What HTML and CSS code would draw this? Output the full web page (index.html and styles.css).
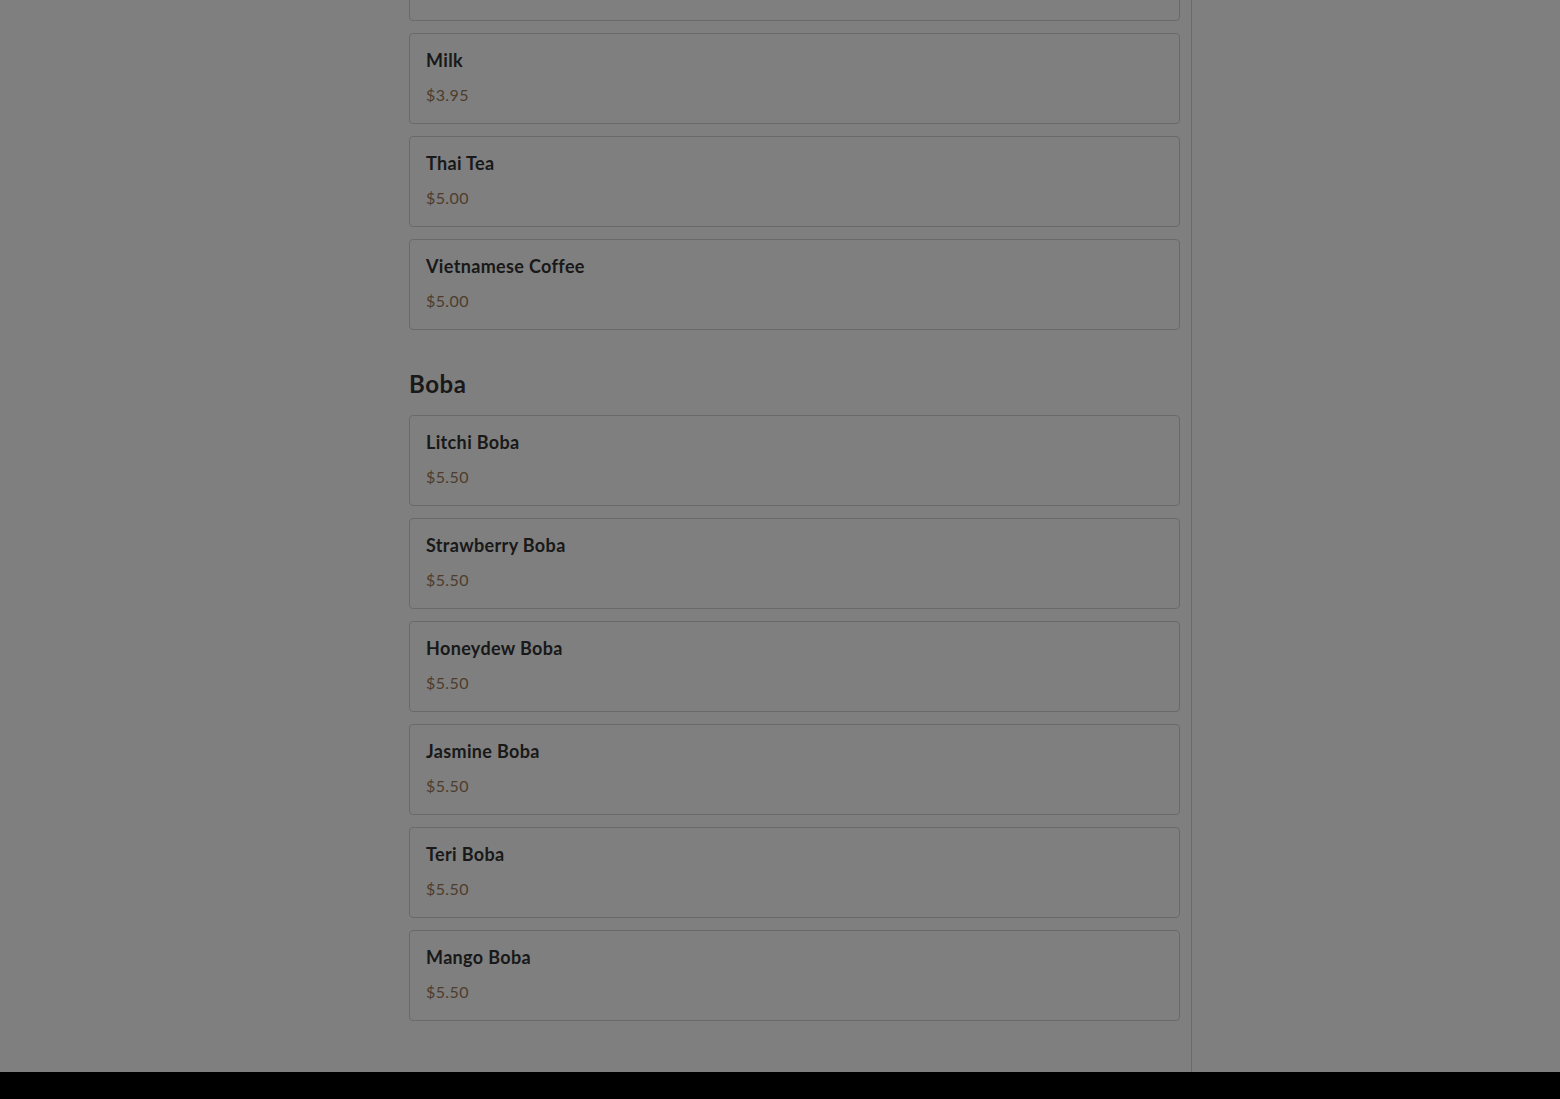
FILE: index.html
```html
<!DOCTYPE html>
<html lang="en">
<head>
<meta charset="utf-8">
<title>Menu</title>
<link rel="stylesheet" href="styles.css">
</head>
<body>
<div class="page">
  <div class="layout">
    <aside class="nav"></aside>
    <main class="main">
      <section class="section section-cut">
        <div class="list">
          <div class="card"><div class="name">Taro</div><div class="price">$3.95</div></div>
          <div class="card"><div class="name">Milk</div><div class="price">$3.95</div></div>
          <div class="card"><div class="name">Thai Tea</div><div class="price">$5.00</div></div>
          <div class="card"><div class="name">Vietnamese Coffee</div><div class="price">$5.00</div></div>
        </div>
      </section>
      <section class="section">
        <h2 class="section-title">Boba</h2>
        <div class="list">
          <div class="card"><div class="name">Litchi Boba</div><div class="price">$5.50</div></div>
          <div class="card"><div class="name">Strawberry Boba</div><div class="price">$5.50</div></div>
          <div class="card"><div class="name">Honeydew Boba</div><div class="price">$5.50</div></div>
          <div class="card"><div class="name">Jasmine Boba</div><div class="price">$5.50</div></div>
          <div class="card"><div class="name">Teri Boba</div><div class="price">$5.50</div></div>
          <div class="card"><div class="name">Mango Boba</div><div class="price">$5.50</div></div>
        </div>
      </section>
    </main>
    <aside class="cart"></aside>
  </div>
  <footer class="footer"></footer>
</div>
<div class="backdrop"></div>
</body>
</html>
```

FILE: styles.css
```css
* { box-sizing: border-box; }
html, body { margin: 0; padding: 0; }
body {
  background: #ffffff;
  font-family: "Lato", "Noto Sans", sans-serif;
  color: #333333;
  overflow: hidden;
}
.page {
  height: 1099px;
  display: flex;
  flex-direction: column;
}
.layout {
  height: 1072px;
  display: grid;
  grid-template-columns: 397px 795px 1fr;
  overflow: hidden;
}
.main {
  padding: 0 11px 0 12px;
  border-right: 1px solid #d6d6d6;
}
.section-cut { margin-top: -70px; }
.section-title {
  margin: 38px 0 15px;
  font-size: 24px;
  line-height: 32px;
  font-weight: 700;
  letter-spacing: 0.6px;
  color: #333333;
}
.list {
  display: flex;
  flex-direction: column;
  gap: 12px;
}
.card {
  height: 91px;
  border: 1px solid #d2d2d2;
  border-radius: 4px;
  padding: 14px 16px 16px;
  background: #ffffff;
}
.name {
  font-size: 18px;
  line-height: 24px;
  font-weight: 700;
  letter-spacing: 0.35px;
  color: #333333;
}
.price {
  margin-top: 11px;
  font-size: 16px;
  line-height: 24px;
  letter-spacing: 0.4px;
  color: #9c7a58;
}
.footer {
  height: 27px;
  background: #000000;
}
.backdrop {
  position: fixed;
  inset: 0;
  background: rgba(0, 0, 0, 0.5);
}
```
